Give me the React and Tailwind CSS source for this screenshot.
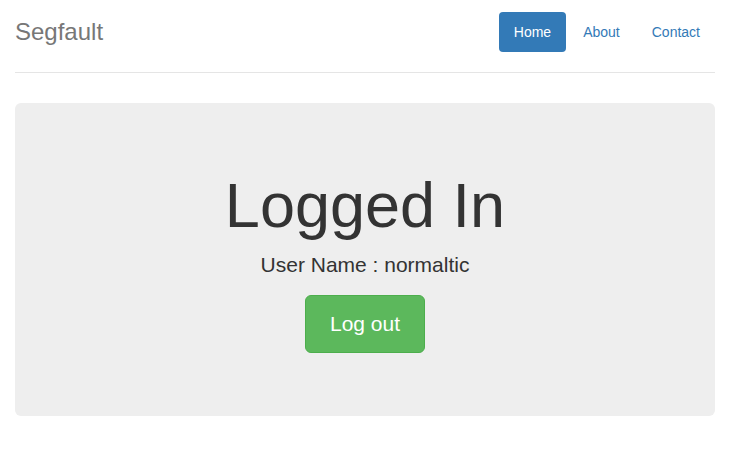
import React from "react";

const navItems = [
  { label: "Home", active: true },
  { label: "About" },
  { label: "Contact" },
];

export default function App() {
  return (
    <div className="min-h-screen bg-white font-['Liberation_Sans',Arial,sans-serif] text-[14px] text-[#333]">
      <div className="px-[15px] pt-[12px]">
        {/* header */}
        <div className="flex items-center justify-between pb-[20px] border-b border-[#e5e5e5]">
          <h3 className="m-0 text-[24px] leading-[40px] text-[#777]">Segfault</h3>
          <ul className="flex gap-[2px]">
            {navItems.map((item) => (
              <li key={item.label}>
                <a
                  href="#"
                  className={`block px-[15px] py-[10px] leading-[20px] rounded-[4px] ${
                    item.active ? "bg-[#337ab7] text-white" : "text-[#337ab7]"
                  }`}
                >
                  {item.label}
                </a>
              </li>
            ))}
          </ul>
        </div>

        {/* jumbotron */}
        <div className="mt-[30px] py-[48px] px-[60px] bg-[#eee] rounded-[6px] text-center">
          <h1 className="mt-[20px] mb-[10px] text-[63px] leading-[1.1] text-[#333]">Logged In</h1>
          <p className="mb-[15px] text-[21px] leading-[30px]">User Name : normaltic</p>
          <p className="mb-[15px]">
            <a
              href="#"
              className="inline-block px-[24px] py-[14px] text-[21px] leading-[28px] rounded-[6px] bg-[#5cb85c] border border-[#4cae4c] text-white"
            >
              Log out
            </a>
          </p>
        </div>
      </div>
    </div>
  );
}
